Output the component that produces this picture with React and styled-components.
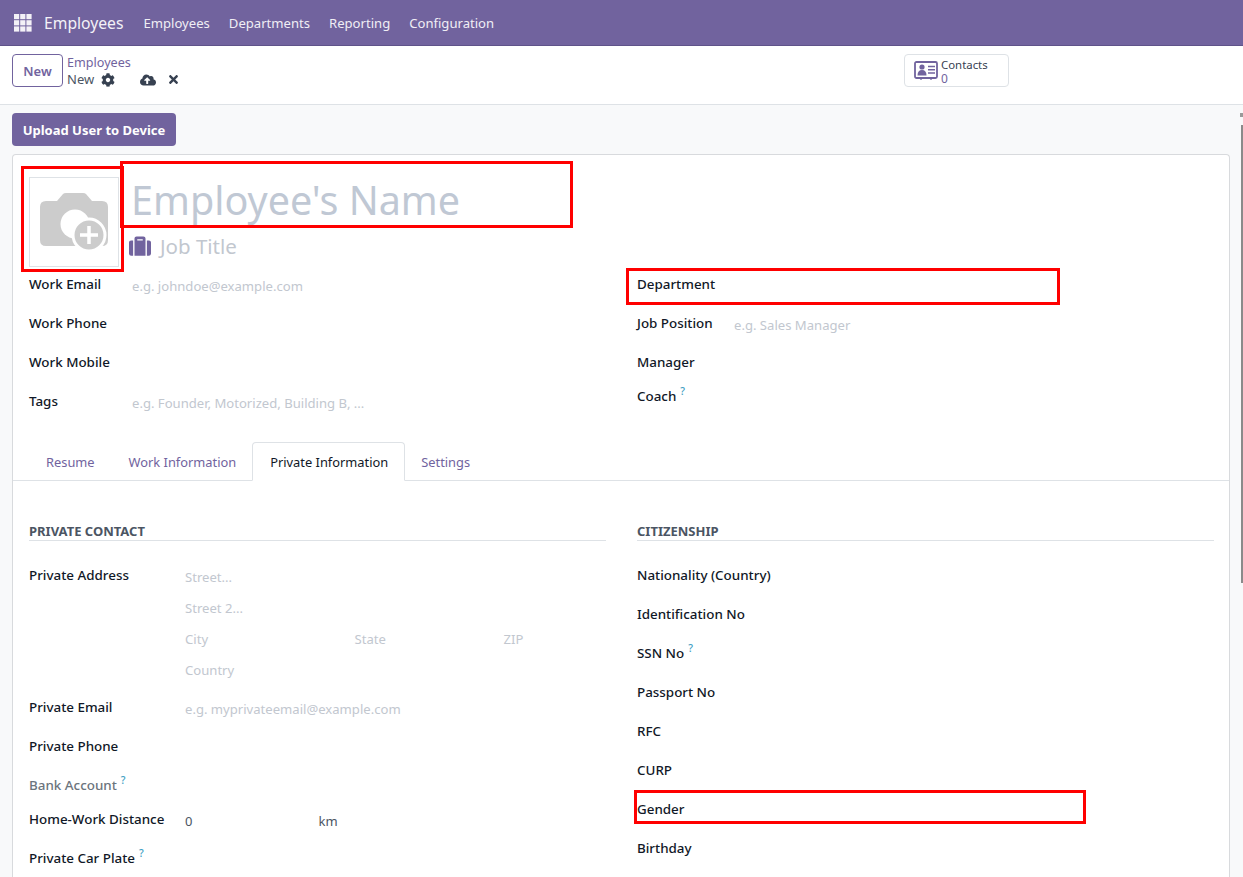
import React from 'react';
import styled, { createGlobalStyle } from 'styled-components';
import { FaCog, FaCloudUploadAlt, FaTimes, FaSuitcase } from 'react-icons/fa';

const Global = createGlobalStyle`
  html, body { margin: 0; padding: 0; height: 100%; overflow: hidden; }
  body { font-family: "Noto Sans", "Open Sans", sans-serif; font-size: 13px; color: #374151; background: #f8f9fa; }
  * { box-sizing: border-box; }
`;

const Page = styled.div`
  position: relative;
  width: 1243px;
  height: 877px;
  overflow: hidden;
  display: flex;
  flex-direction: column;
`;

const Navbar = styled.header`
  flex: none;
  height: 46px;
  background: #71639e;
  border-bottom: 1px solid #5f5389;
  display: flex;
  align-items: center;
  padding-left: 14px;
  color: #fff;
`;
const Brand = styled.span`
  font-size: 15.7px;
  margin-left: 12px;
  margin-right: 20px;
  color: #f3f1f7;
`;
const NavLink = styled.span`
  font-size: 13.1px;
  margin-right: 19px;
  color: #f0eef5;
`;

const ControlPanel = styled.div`
  flex: none;
  height: 59px;
  background: #fff;
  border-bottom: 1px solid #dee2e6;
  display: flex;
  padding: 8px 0 0 12px;
`;
const NewButton = styled.button`
  width: 51px;
  height: 33px;
  background: #fff;
  border: 1px solid #71639e;
  border-radius: 4px;
  color: #71639e;
  font: 600 13px "Noto Sans", sans-serif;
  padding: 0;
`;
const Crumbs = styled.div`
  margin-left: 4px;
  line-height: 17px;
  width: 837px;
`;
const CrumbLink = styled.div`
  color: #71639e;
  font-size: 12.6px;
`;
const CrumbCurrent = styled.div`
  display: flex;
  align-items: center;
  color: #4b5563;
  font-size: 13px;
  svg { color: #374151; }
`;
const CrumbIcon = styled.span`
  display: flex;
  margin-left: ${p => p.$gap}px;
`;
const StatButton = styled.div`
  width: 105px;
  height: 33px;
  border: 1px solid #dee2e6;
  border-radius: 4px;
  display: flex;
  align-items: flex-start;
  padding: 3px 0 0 9px;
  font-size: 11.4px;
  line-height: 14px;
  color: #374151;
  svg { margin-top: 3px; flex: none; }
`;
const StatText = styled.div`
  margin-left: 3px;
`;
const StatValue = styled.div`
  color: #71639e;
  font-size: 12px;
`;

const Content = styled.main`
  flex: 1;
  padding: 8px 13px 0 12px;
  min-height: 0;
`;
const ActionButton = styled.button`
  display: block;
  width: 164px;
  height: 33px;
  border: none;
  border-radius: 4px;
  background: #71639e;
  color: #fff;
  font: 700 13px "Noto Sans", sans-serif;
  padding: 0;
`;

const Card = styled.section`
  margin-top: 8px;
  background: #fff;
  border: 1px solid #d8dadd;
  border-bottom: none;
  border-radius: 4px 4px 0 0;
  height: 800px;
`;
const Head = styled.div`
  position: relative;
  padding: 22px 16px 0;
  height: 120px;
  display: flex;
`;
const Avatar = styled.div`
  width: 90px;
  height: 90px;
  border: 1px solid #dee2e6;
  display: flex;
  align-items: center;
  justify-content: center;
  flex: none;
`;
const Titles = styled.div`
  margin-left: 9px;
`;
const NameText = styled.div`
  font-size: 39.5px;
  line-height: 53px;
  margin: -3px 0 0 3px;
  color: #c0c8d4;
`;
const JobTitle = styled.div`
  display: flex;
  align-items: center;
  margin-top: 6px;
  font-size: 20.5px;
  line-height: 26px;
  color: #c2c7cf;
  svg { color: #71639e; margin: 0 9px 0 1px; }
`;

const Columns = styled.div`
  display: grid;
  grid-template-columns: 577px 577px;
  column-gap: 31px;
  padding: 0 16px;
`;
const Col = styled.div`
  min-width: 0;
`;
const Row = styled.div`
  display: flex;
  align-items: flex-start;
  height: ${p => p.$h || 39}px;
`;
const Label = styled.div`
  width: ${p => p.$w}px;
  flex: none;
  font-weight: 500;
  font-size: 13.4px;
  line-height: 18px;
  color: ${p => (p.$muted ? '#6c757d' : '#111827')};
`;
const Help = styled.sup`
  font-size: 10.5px;
  color: #3f9fc4;
  margin-left: 4px;
  font-weight: 500;
  line-height: 0;
  position: relative;
  top: -1px;
`;
const Placeholder = styled.div`
  color: #c2c7cf;
  font-size: 13.1px;
  line-height: 18px;
  margin-top: 2px;
  ${p => p.$w && `width: ${p.$w}px;`}
`;
const Value = styled.div`
  color: #4b5563;
  font-size: 13px;
  line-height: 18px;
  margin-top: 2px;
  ${p => p.$w && `width: ${p.$w}px;`}
`;

const Tabs = styled.nav`
  margin-top: 11px;
  height: 39px;
  display: flex;
  align-items: flex-end;
  padding-left: 16px;
  border-bottom: 1px solid #dee2e6;
`;
const Tab = styled.div`
  height: ${p => (p.$active ? 39 : 38)}px;
  padding: 0 ${p => p.$r ?? 16}px 0 ${p => p.$l ?? 16}px;
  display: flex;
  align-items: center;
  justify-content: center;
  color: ${p => (p.$active ? '#111827' : '#71639e')};
  font-size: 12.85px;
  border: 1px solid ${p => (p.$active ? '#dee2e6' : 'transparent')};
  border-bottom: ${p => (p.$active ? '1px solid #fff' : 'none')};
  border-radius: 4px 4px 0 0;
  margin-bottom: -1px;
  margin-right: ${p => (p.$active ? 0 : -1)}px;
  position: relative;
  top: ${p => (p.$active ? 0 : -1)}px;
`;
const TabBody = styled.div`
  padding-top: 41px;
`;
const SectionTitle = styled.h3`
  margin: 0 0 25px;
  font-size: 13px;
  line-height: 18px;
  height: 19px;
  font-weight: 700;
  color: #4b5563;
  text-transform: uppercase;
  border-bottom: 1px solid #dee2e6;
`;

const Mark = styled.div`
  position: absolute;
  left: ${p => p.$x}px;
  top: ${p => p.$y}px;
  width: ${p => p.$w}px;
  height: ${p => p.$h}px;
  border: 3px solid #ff0000;
  pointer-events: none;
`;
const Scrollbar = styled.div`
  position: absolute;
  right: 0;
  top: 125px;
  width: 2px;
  height: 458px;
  background: #8a8a8a;
`;
const ScrollArrow = styled.div`
  position: absolute;
  right: 0;
  top: 113px;
  width: 3px;
  height: 4px;
  background: #9a9a9a;
`;

const GridIcon = () => (
  <svg width="18" height="18" viewBox="0 0 18 18" fill="#f3f1f7">
    {[0, 6.2, 12.4].flatMap(y => [0, 6.2, 12.4].map(x => (
      <rect key={`${x}-${y}`} x={x} y={y} width="5.2" height="5.2" />
    )))}
  </svg>
);

const CameraIcon = () => (
  <svg width="70" height="66" viewBox="0 0 70 66">
    <path fill="#cccccc" d="M18 12 L24 5 Q25 4 27 4 H44 Q46 4 47 5 L53 12 H63 Q69 12 69 18 V51 Q69 57 63 57 H7 Q1 57 1 51 V18 Q1 12 7 12 Z" />
    <circle cx="36" cy="35" r="14.5" fill="#fff" />
    <circle cx="50" cy="46" r="16" fill="#cccccc" stroke="#fff" strokeWidth="3" />
    <path d="M50 37 V55 M41 46 H59" stroke="#fff" strokeWidth="3.5" fill="none" />
  </svg>
);

const ContactCardIcon = () => (
  <svg width="24" height="20" viewBox="0 0 24 20">
    <rect x="1" y="1" width="22" height="16" rx="1.5" fill="none" stroke="#71639e" strokeWidth="1.8" />
    <circle cx="8" cy="6" r="2.6" fill="#71639e" />
    <path d="M3.5 14.5 Q3.5 9 8 9 Q12.5 9 12.5 14.5 Z" fill="#71639e" />
    <path d="M14 5.5 H21 M14 8.8 H21 M14 12 H21" stroke="#71639e" strokeWidth="1.5" />
    <path d="M7 17 V19 M17 17 V19" stroke="#71639e" strokeWidth="1.2" />
  </svg>
);

export default function App() {
  return (
    <Page>
      <Global />
      <Navbar>
        <GridIcon />
        <Brand>Employees</Brand>
        <NavLink>Employees</NavLink>
        <NavLink>Departments</NavLink>
        <NavLink>Reporting</NavLink>
        <NavLink>Configuration</NavLink>
      </Navbar>
      <ControlPanel>
        <NewButton>New</NewButton>
        <Crumbs>
          <CrumbLink>Employees</CrumbLink>
          <CrumbCurrent>
            New
            <CrumbIcon $gap={7}><FaCog size={14} /></CrumbIcon>
            <CrumbIcon $gap={25}><FaCloudUploadAlt size={16} /></CrumbIcon>
            <CrumbIcon $gap={11}><FaTimes size={13} /></CrumbIcon>
          </CrumbCurrent>
        </Crumbs>
        <StatButton>
          <ContactCardIcon />
          <StatText>
            <div>Contacts</div>
            <StatValue>0</StatValue>
          </StatText>
        </StatButton>
      </ControlPanel>
      <Content>
        <ActionButton>Upload User to Device</ActionButton>
        <Card>
          <Head>
            <Avatar><CameraIcon /></Avatar>
            <Titles>
              <NameText>Employee's Name</NameText>
              <JobTitle><FaSuitcase size={22} />Job Title</JobTitle>
            </Titles>
          </Head>
          <Columns>
            <Col>
              <Row><Label $w={103}>Work Email</Label><Placeholder>e.g. johndoe@example.com</Placeholder></Row>
              <Row><Label $w={103}>Work Phone</Label></Row>
              <Row><Label $w={103}>Work Mobile</Label></Row>
              <Row><Label $w={103}>Tags</Label><Placeholder>e.g. Founder, Motorized, Building B, ...</Placeholder></Row>
            </Col>
            <Col>
              <Row><Label $w={97}>Department</Label></Row>
              <Row><Label $w={97}>Job Position</Label><Placeholder>e.g. Sales Manager</Placeholder></Row>
              <Row $h={34}><Label $w={97}>Manager</Label></Row>
              <Row><Label $w={97}>Coach<Help>?</Help></Label></Row>
            </Col>
          </Columns>
          <Tabs>
            <Tab $r={17}>Resume</Tab>
            <Tab $r={16}>Work Information</Tab>
            <Tab $active $l={17}>Private Information</Tab>
            <Tab $l={15}>Settings</Tab>
          </Tabs>
          <TabBody>
            <Columns>
              <Col>
                <SectionTitle>Private Contact</SectionTitle>
                <Row $h={31}><Label $w={156}>Private Address</Label><Placeholder>Street...</Placeholder></Row>
                <Row $h={31}><Label $w={156} /><Placeholder>Street 2...</Placeholder></Row>
                <Row $h={31}>
                  <Label $w={156} />
                  <Placeholder $w={169.5}>City</Placeholder>
                  <Placeholder $w={149}>State</Placeholder>
                  <Placeholder>ZIP</Placeholder>
                </Row>
                <Row $h={39}><Label $w={156} /><Placeholder>Country</Placeholder></Row>
                <Row><Label $w={156}>Private Email</Label><Placeholder>e.g. myprivateemail@example.com</Placeholder></Row>
                <Row><Label $w={156}>Private Phone</Label></Row>
                <Row $h={34}><Label $w={156} $muted>Bank Account<Help>?</Help></Label></Row>
                <Row>
                  <Label $w={156}>Home-Work Distance</Label>
                  <Value $w={133.5}>0</Value>
                  <Value>km</Value>
                </Row>
                <Row><Label $w={156}>Private Car Plate<Help>?</Help></Label></Row>
              </Col>
              <Col>
                <SectionTitle>Citizenship</SectionTitle>
                <Row><Label $w={156}>Nationality (Country)</Label></Row>
                <Row><Label $w={156}>Identification No</Label></Row>
                <Row><Label $w={156}>SSN No<Help>?</Help></Label></Row>
                <Row><Label $w={156}>Passport No</Label></Row>
                <Row><Label $w={156}>RFC</Label></Row>
                <Row><Label $w={156}>CURP</Label></Row>
                <Row><Label $w={156}>Gender</Label></Row>
                <Row><Label $w={156}>Birthday</Label></Row>
              </Col>
            </Columns>
          </TabBody>
        </Card>
      </Content>
      <Mark $x={21} $y={166} $w={103} $h={106} />
      <Mark $x={120} $y={161} $w={453} $h={67} />
      <Mark $x={626} $y={268} $w={434} $h={37} />
      <Mark $x={634} $y={790} $w={452} $h={34} />
      <ScrollArrow />
      <Scrollbar />
    </Page>
  );
}
